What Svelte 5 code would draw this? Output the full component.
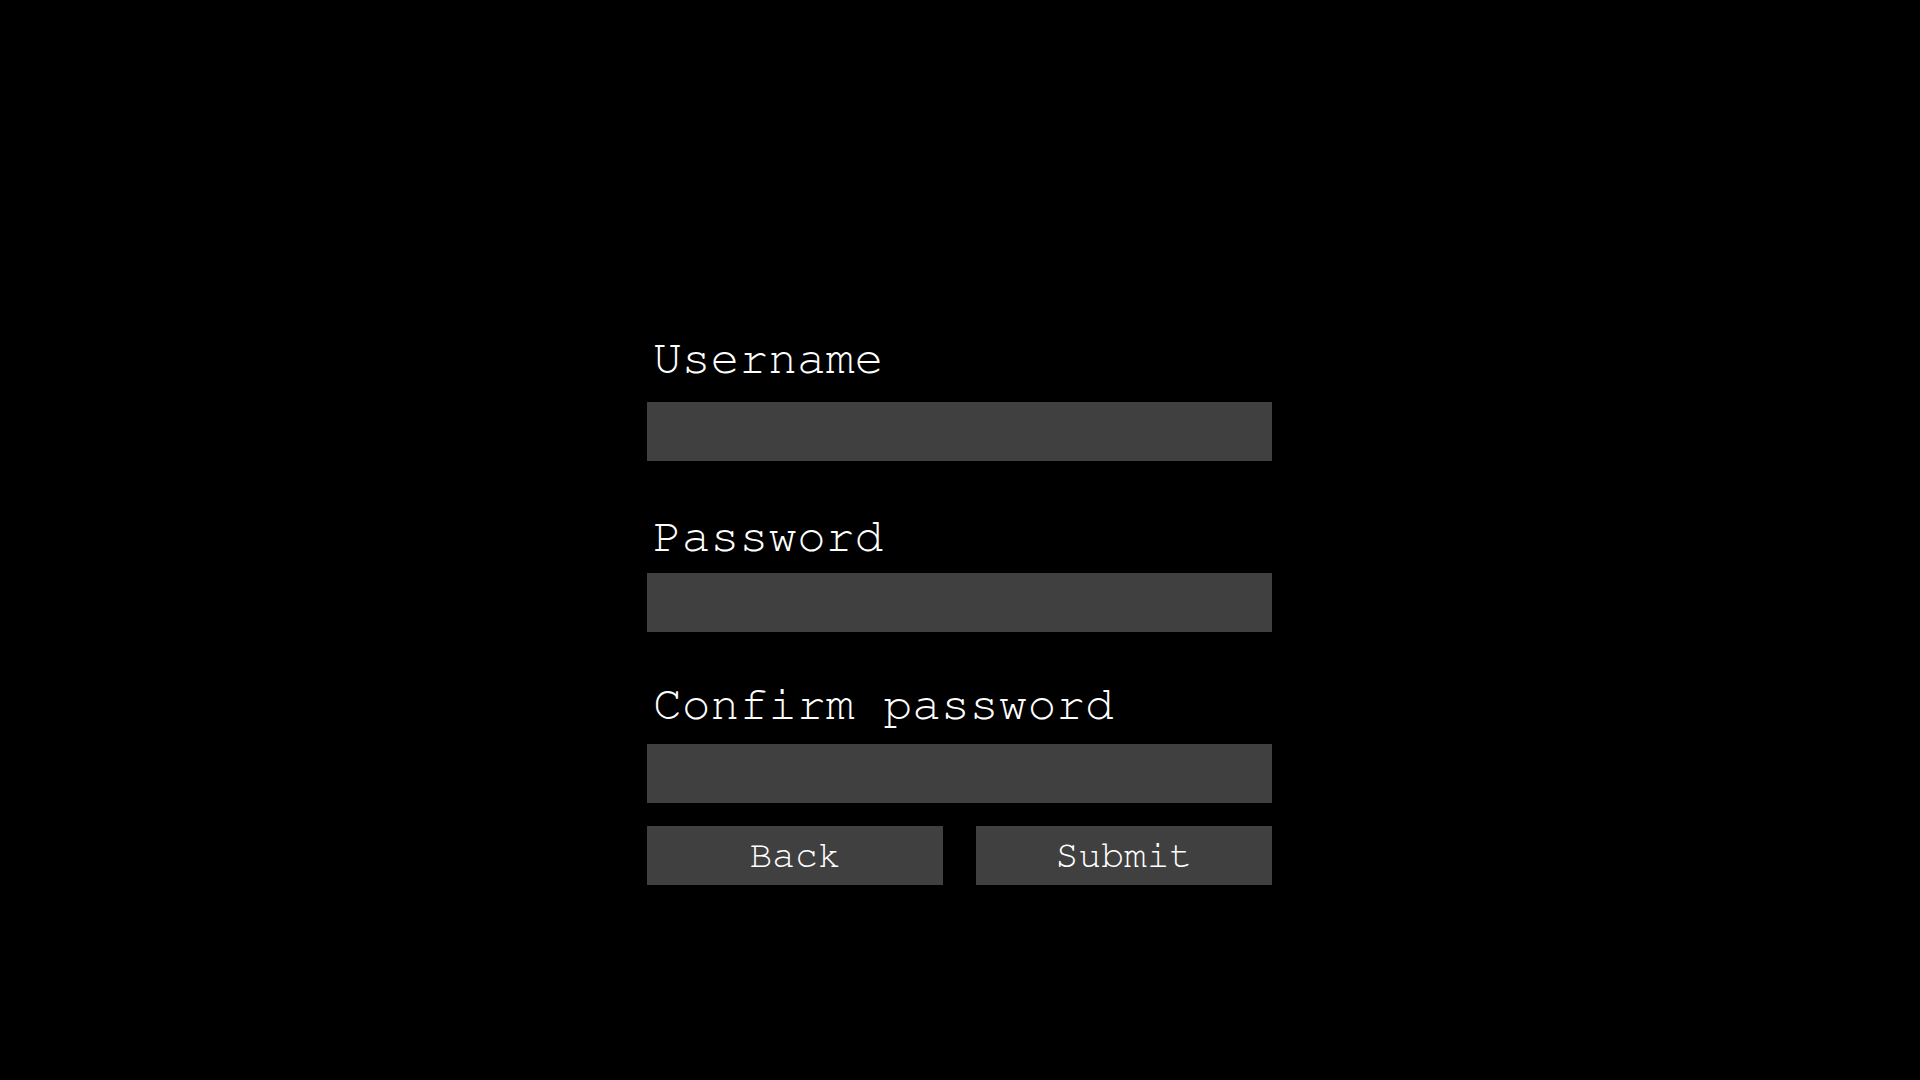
<script>
  let username = $state('');
  let password = $state('');
  let confirmation = $state('');
</script>

<main>
  <form onsubmit={(event) => event.preventDefault()}>
    <div class="field username">
      <label for="username">Username</label>
      <input id="username" type="text" autocomplete="username" bind:value={username} />
    </div>
    <div class="field password">
      <label for="password">Password</label>
      <input id="password" type="password" autocomplete="new-password" bind:value={password} />
    </div>
    <div class="field confirm">
      <label for="confirm">Confirm password</label>
      <input id="confirm" type="password" autocomplete="new-password" bind:value={confirmation} />
    </div>
    <div class="actions">
      <button type="button">Back</button>
      <button type="submit">Submit</button>
    </div>
  </form>
</main>

<style>
  :global(body) {
    margin: 0;
    background: #000;
  }

  main {
    display: grid;
    grid-template-columns: 647fr minmax(0, 625px) 648fr;
    box-sizing: border-box;
    min-height: 100vh;
    padding: 332px 0 48px;
    color: #fff;
    font-family: 'FreeMono', 'Nimbus Mono PS', 'Nimbus Mono L', 'Courier Prime', 'Cousine', 'Courier New', 'Liberation Mono', monospace;
  }

  form {
    grid-column: 2;
  }

  .field {
    display: flex;
    flex-direction: column;
  }

  .username {
    gap: 16px;
  }

  .password {
    gap: 9px;
    margin-top: 49px;
  }

  .confirm {
    gap: 12px;
    margin-top: 46px;
  }

  label {
    padding-left: 6px;
    font-size: 48px;
    line-height: 54px;
  }

  input,
  button {
    box-sizing: border-box;
    height: 59px;
    margin: 0;
    border: 0;
    border-radius: 0;
    background: #404040;
    color: inherit;
    font-family: inherit;
    font-size: 38px;
    line-height: 43px;
  }

  input {
    width: 100%;
    padding: 0 6px;
    outline: none;
  }

  input:focus-visible,
  button:focus-visible {
    outline: 2px solid #fff;
  }

  button {
    padding: 2px 0 0;
    cursor: pointer;
  }

  .actions {
    display: grid;
    grid-template-columns: 1fr 1fr;
    gap: 33px;
    margin-top: 23px;
  }
</style>
